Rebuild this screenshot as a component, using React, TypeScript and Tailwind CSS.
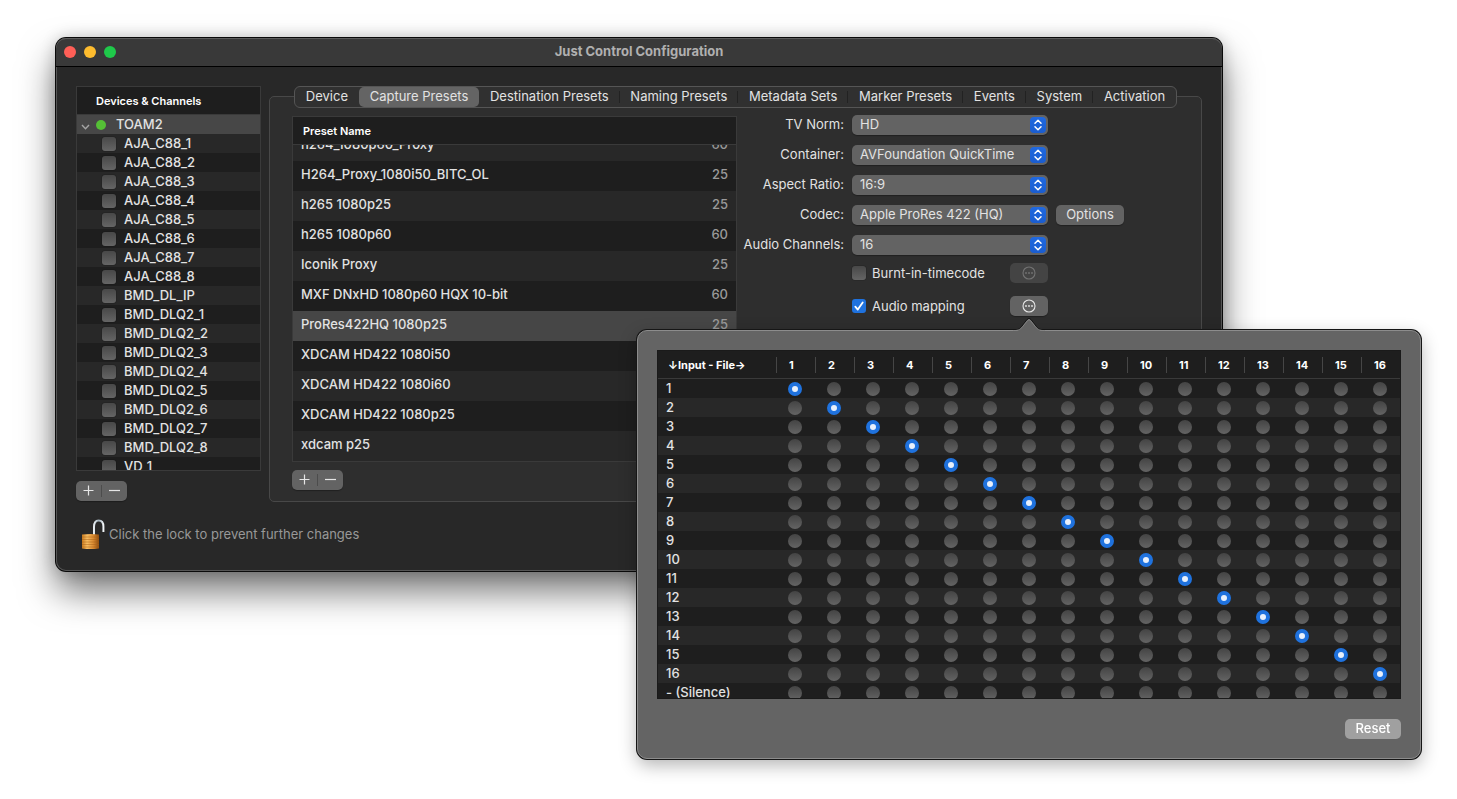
import { useLayoutEffect, useRef, useState } from 'react';
import clsx from 'clsx';

const TABS = [
  'Device',
  'Capture Presets',
  'Destination Presets',
  'Naming Presets',
  'Metadata Sets',
  'Marker Presets',
  'Events',
  'System',
  'Activation',
];

const CHANNELS = [
  ...Array.from({ length: 8 }, (_, i) => `AJA_C88_${i + 1}`),
  'BMD_DL_IP',
  ...Array.from({ length: 8 }, (_, i) => `BMD_DLQ2_${i + 1}`),
  'VD_1',
];

interface Preset {
  name: string;
  fps:  number;
}

const PRESETS: Preset[] = [
  { name: 'h264_1080p60_Proxy',         fps: 60 },
  { name: 'H264_Proxy_1080i50_BITC_OL', fps: 25 },
  { name: 'h265 1080p25',               fps: 25 },
  { name: 'h265 1080p60',               fps: 60 },
  { name: 'Iconik Proxy',               fps: 25 },
  { name: 'MXF DNxHD 1080p60 HQX 10-bit', fps: 60 },
  { name: 'ProRes422HQ 1080p25',        fps: 25 },
  { name: 'XDCAM HD422 1080i50',        fps: 50 },
  { name: 'XDCAM HD422 1080i60',        fps: 60 },
  { name: 'XDCAM HD422 1080p25',        fps: 25 },
  { name: 'xdcam p25',                  fps: 25 },
];

const FILE_CHANNELS = Array.from({ length: 16 }, (_, i) => i + 1);
const INPUTS = [...FILE_CHANNELS.map(String), '- (Silence)'];

const CHECKBOX =
  'block size-3.5 shrink-0 appearance-none rounded-[3px] bg-linear-to-b from-[#484848] to-[#656565] shadow-[0_0_1px_#000]';

function AddRemove({ what }: { what: string }) {
  return (
    <div className="flex h-5 w-[51px] items-center rounded-[5px] bg-[#636363] text-[#e6e6e6] shadow-[0_1px_1px_rgba(0,0,0,0.3)]">
      <button type="button" aria-label={`Add ${what}`} className="flex h-5 flex-1 items-center justify-center pb-px">
        <svg viewBox="0 0 11 11" className="size-[11px]" stroke="currentColor" strokeWidth="1.2">
          <path d="M5.5 0.5v10M0.5 5.5h10" />
        </svg>
      </button>
      <span className="h-3 w-px bg-[#4c4c4c]" />
      <button type="button" aria-label={`Remove ${what}`} className="flex h-5 flex-1 items-center justify-center pb-px">
        <svg viewBox="0 0 11 11" className="size-[11px]" stroke="currentColor" strokeWidth="1.2">
          <path d="M0 5.5h11" />
        </svg>
      </button>
    </div>
  );
}

function DeviceList() {
  return (
    <div className="h-[385px] overflow-hidden border border-[#3a3a3a] bg-[#1e1e1e]">
      <h2 className="h-7 border-b border-[#3a3a3a] pl-[19px] text-[11px] leading-7 font-semibold text-white">
        Devices &amp; Channels
      </h2>
      <ul className="font-medium">
        <li className="flex h-[19px] items-center bg-[#474747]">
          <svg viewBox="0 0 9 6" className="mt-1 ml-1 h-1.5 w-[9px] text-[#a5a5a5]" fill="none" stroke="currentColor" strokeWidth="1.4">
            <path d="M1 1l3.5 3.7L8 1" />
          </svg>
          <span className="ml-1.5 size-2.5 rounded-full bg-[#55c036]" />
          <span className="ml-2.5 pb-0.5">TOAM2</span>
        </li>
        {CHANNELS.map((c, i) => (
          <li key={c} className={clsx('pl-[25px]', i % 2 ? 'bg-[#1e1e1e]' : 'bg-[#282828]')}>
            <label className="flex h-[19px] items-center gap-2">
              <input type="checkbox" className={CHECKBOX} />
              <span className="pb-0.5">{c}</span>
            </label>
          </li>
        ))}
      </ul>
    </div>
  );
}

function PresetTable() {
  const scroller = useRef<HTMLDivElement>(null);
  const [selected, setSelected] = useState('ProRes422HQ 1080p25');

  // keep the end of the list in view
  useLayoutEffect(() => {
    if (scroller.current) scroller.current.scrollTop = scroller.current.scrollHeight;
  }, []);

  return (
    <div ref={scroller} className="h-[346px] overflow-hidden border border-[#3a3a3a] bg-[#1e1e1e]">
      <table className="w-full border-separate border-spacing-0">
        <thead className="sticky top-0">
          <tr>
            <th colSpan={2} className="h-7 border-b border-[#3a3a3a] bg-[#1e1e1e] p-0 pl-2.5 text-left text-[11px] font-semibold text-white">
              Preset Name
            </th>
          </tr>
        </thead>
        <tbody className="font-medium">
          {PRESETS.map((p, i) => (
            <tr
              key={p.name}
              onClick={() => setSelected(p.name)}
              className={clsx(p.name === selected ? 'bg-[#464646]' : i % 2 ? 'bg-[#1e1e1e]' : 'bg-[#282828]')}
            >
              <td className="h-[30px] p-0 pb-1 pl-2 leading-5">{p.name}</td>
              <td className="h-[30px] p-0 pr-2 pb-1 text-right leading-5 text-[#9a9a9a]">{p.fps}</td>
            </tr>
          ))}
        </tbody>
      </table>
    </div>
  );
}

function Popup({ id, label, value }: { id: string; label: string; value: string }) {
  return (
    <>
      <label htmlFor={id} className="pb-0.5 text-right whitespace-nowrap">{label}</label>
      <div className="relative">
        <select
          id={id}
          defaultValue={value}
          className="block h-5 w-full appearance-none rounded-[5px] bg-[#636363] pr-5 pb-0.5 pl-2 shadow-[0_1px_1px_rgba(0,0,0,0.3)]"
        >
          <option>{value}</option>
        </select>
        <span className="pointer-events-none absolute top-0.5 right-0.5 flex size-4 items-center justify-center rounded-sm bg-linear-to-b from-[#2069e0] to-[#1a5dd0]">
          <svg viewBox="0 0 8 12" className="h-3 w-2" fill="none" stroke="#fff" strokeWidth="1.5" strokeLinecap="round" strokeLinejoin="round">
            <path d="M1 4.3L4 1.3l3 3M1 7.7l3 3 3-3" />
          </svg>
        </span>
      </div>
    </>
  );
}

function MoreButton({ label, disabled }: { label: string; disabled?: boolean }) {
  return (
    <button
      type="button"
      aria-label={label}
      disabled={disabled}
      className={clsx(
        'flex h-5 w-[38px] items-center justify-center rounded-[5px]',
        disabled ? 'bg-[#444444] text-[#737373]' : 'bg-[#636363] text-[#e6e6e6] shadow-[0_1px_1px_rgba(0,0,0,0.3)]',
      )}
    >
      <svg viewBox="0 0 14 14" className="size-3.5">
        <circle cx="7" cy="7" r="6" fill="none" stroke="currentColor" strokeWidth="1.1" />
        <circle cx="4" cy="7" r="0.9" fill="currentColor" />
        <circle cx="7" cy="7" r="0.9" fill="currentColor" />
        <circle cx="10" cy="7" r="0.9" fill="currentColor" />
      </svg>
    </button>
  );
}

function MappingMatrix() {
  // file channel -> row of the input that feeds it
  const [mapping, setMapping] = useState(FILE_CHANNELS.map((_, i) => i));

  return (
    <div className="absolute top-[34px] -left-[373px] z-10 w-[784px] rounded-[10px] border border-[#8c8c8c] bg-[#646464] p-[19px] font-medium shadow-[0_0_0_1px_#161616,0_6px_18px_rgba(0,0,0,0.3)]">
      <svg viewBox="0 0 32 14" className="absolute -top-[14px] left-[375px] h-3.5 w-8">
        <path d="M0 14C6 14 7 12 9 9.5L14 3Q16 0.5 18 3L23 9.5C25 12 26 14 32 14Z" fill="#646464" />
        <path d="M0 12.8C6 12.8 7 11.5 9 9L14 2.5Q16 0 18 2.5L23 9C25 11.5 26 12.8 32 12.8" fill="none" stroke="#161616" />
        <path d="M0 13.6C6 13.6 7.5 12 9.5 9.8L14.5 3.6Q16 1.8 17.5 3.6L22.5 9.8C24.5 12 26 13.6 32 13.6" fill="none" stroke="#8c8c8c" strokeWidth="0.8" />
      </svg>

      <div className="h-[349px] overflow-hidden border border-[#1a1a1a] bg-[#1e1e1e]">
        <table className="w-full table-fixed border-separate border-spacing-0">
          <thead>
            <tr className="text-[11px] font-semibold text-white">
              <th className="h-7 w-[118px] border-b border-[#3a3a3a] p-0 pl-2.5 text-left leading-4 whitespace-nowrap">
                ↓Input - File→
              </th>
              {FILE_CHANNELS.map(n => (
                <th key={n} className="h-7 border-b border-[#3a3a3a] p-0 text-left">
                  <div className="h-4 border-l border-[#464646] pl-3 leading-4">{n}</div>
                </th>
              ))}
            </tr>
          </thead>
          <tbody>
            {INPUTS.map((input, row) => (
              <tr key={input} className={row % 2 ? 'bg-[#282828]' : 'bg-[#1e1e1e]'}>
                <th scope="row" className="h-[19px] p-0 pl-2 text-left leading-[19px] font-medium">{input}</th>
                {FILE_CHANNELS.map((n, col) => (
                  <td key={n} className="h-[19px] p-0 pt-[3px] pl-3 align-top">
                    <input
                      type="radio"
                      name={`file-${n}`}
                      aria-label={`Input ${input} to file channel ${n}`}
                      checked={mapping[col] === row}
                      onChange={() => setMapping(mapping.map((m, i) => (i === col ? row : m)))}
                      className="block size-3.5 appearance-none rounded-full bg-linear-to-b from-[#444444] to-[#646464] checked:border-4 checked:border-[#1f72de] checked:bg-[#e8f0fc] checked:bg-none"
                    />
                  </td>
                ))}
              </tr>
            ))}
          </tbody>
        </table>
      </div>

      <div className="mt-5 flex justify-end">
        <button
          type="button"
          onClick={() => setMapping(FILE_CHANNELS.map((_, i) => i))}
          className="h-5 w-14 rounded-[5px] bg-[#a0a0a0] pb-0.5 text-white"
        >
          Reset
        </button>
      </div>
    </div>
  );
}

function PresetForm() {
  return (
    <form className="w-[464px] shrink-0">
      <div className="grid grid-cols-[107px_196px_68px] items-center gap-x-2 gap-y-2.5">
        <Popup id="norm" label="TV Norm:" value="HD" />
        <span />
        <Popup id="container" label="Container:" value="AVFoundation QuickTime" />
        <span />
        <Popup id="aspect" label="Aspect Ratio:" value="16:9" />
        <span />
        <Popup id="codec" label="Codec:" value="Apple ProRes 422 (HQ)" />
        <button type="button" className="h-5 rounded-[5px] bg-[#636363] pb-0.5 shadow-[0_1px_1px_rgba(0,0,0,0.3)]">
          Options
        </button>
        <Popup id="channels" label="Audio Channels:" value="16" />
      </div>

      <div className="mt-2 ml-[115px] flex h-5 w-[196px] items-center justify-between">
        <label className="flex items-center gap-1.5">
          <input type="checkbox" className={CHECKBOX} />
          Burnt-in-timecode
        </label>
        <MoreButton label="Timecode options" disabled />
      </div>
      <div className="mt-[13px] ml-[115px] flex h-5 w-[196px] items-center justify-between">
        <label className="flex items-center gap-1.5">
          <span className="relative">
            <input type="checkbox" defaultChecked className="block size-3.5 appearance-none rounded-[3px] bg-[#1f72de]" />
            <svg viewBox="0 0 14 14" className="pointer-events-none absolute inset-0 size-3.5" fill="none" stroke="#fff" strokeWidth="1.8" strokeLinecap="round" strokeLinejoin="round">
              <path d="M3.3 7.6l2.5 3L10.7 3.5" />
            </svg>
          </span>
          Audio mapping
        </label>
        <div className="relative">
          <MoreButton label="Audio mapping options" />
          <MappingMatrix />
        </div>
      </div>
    </form>
  );
}

function LockIcon() {
  return (
    <svg viewBox="0 0 25 32" className="h-8 w-[25px] shrink-0">
      <defs>
        <linearGradient id="brass" x1="0" x2="1" y1="0" y2="0">
          <stop offset="0" stopColor="#c87a1e" />
          <stop offset="0.3" stopColor="#f7bd62" />
          <stop offset="0.65" stopColor="#dc8d33" />
          <stop offset="1" stopColor="#8f4c0d" />
        </linearGradient>
        <linearGradient id="steel" x1="0" x2="1" y1="0" y2="0">
          <stop offset="0" stopColor="#e8eef2" />
          <stop offset="0.5" stopColor="#9fb0bb" />
          <stop offset="1" stopColor="#f2f6f8" />
        </linearGradient>
      </defs>
      <path d="M14 17V9C14 4.8 15.5 2.4 18.6 2.4S23.4 4.8 23.4 8.6V14" fill="none" stroke="url(#steel)" strokeWidth="2" />
      <path d="M2 16.6Q10.500 15.500 19 16.600V30.400Q10.500 31.600 2 30.400Z" fill="url(#brass)" />
      <path d="M2 19h17M2 21.500h17M2 24h17M2 26.500h17M2 29h17" stroke="#a8621a" strokeWidth="0.7" opacity="0.7" />
    </svg>
  );
}

export default function App() {
  const [tab, setTab] = useState('Capture Presets');
  const active = TABS.indexOf(tab);

  return (
    <div className="min-h-screen bg-white pt-[38px] pr-[235px] pb-10 pl-14 font-[Inter,'Liberation_Sans',sans-serif] text-[13px] leading-4 text-[#e2e2e2]">
      <main className="rounded-[10px] bg-[#282828] shadow-[inset_0_0_0_1px_#555555,0_0_0_1px_#0a0a0a,0_0_16px_rgba(0,0,0,0.2),0_20px_36px_rgba(0,0,0,0.55)]">
        <header className="flex h-[29px] items-center rounded-t-[10px] border-b border-black bg-[#393939] px-2 shadow-[inset_0_1px_0_#5c5c5c]">
          <div className="flex flex-1 gap-2">
            <button type="button" aria-label="Close" className="size-3 rounded-full bg-[#ff5f57]" />
            <button type="button" aria-label="Minimize" className="size-3 rounded-full bg-[#febc2e]" />
            <button type="button" aria-label="Zoom" className="size-3 rounded-full bg-[#1fc94a]" />
          </div>
          <h1 className="pb-0.5 font-bold text-[#b0b0b0]">Just Control Configuration</h1>
          <div className="flex-1" />
        </header>

        <div className="flex gap-2 px-5 pt-[19px]">
          <aside className="w-[185px] shrink-0">
            <DeviceList />
            <div className="mt-2.5">
              <AddRemove what="device" />
            </div>
          </aside>

          <section className="flex-1">
            <nav role="tablist" className="relative mx-[25px] flex h-[22px] rounded-md border border-[#555555] bg-[#303030]">
              {TABS.map((t, i) => (
                <button
                  key={t}
                  type="button"
                  role="tab"
                  aria-selected={t === tab}
                  onClick={() => setTab(t)}
                  className={clsx(
                    'relative flex-auto pb-0.5 text-center whitespace-nowrap',
                    t === tab && 'rounded-[5px] bg-[#646464]',
                  )}
                >
                  {t}
                  {i < TABS.length - 1 && i !== active && i !== active - 1 && (
                    <span className="absolute top-1 right-0 h-3 w-px bg-[#222222]" />
                  )}
                </button>
              ))}
            </nav>

            <div className="-mt-3 flex rounded-[5px] border border-[#484848] bg-[#2e2e2e] pt-[18px] pb-[11px] pl-[22px]">
              <div className="flex-1 pt-px">
                <PresetTable />
                <div className="mt-2">
                  <AddRemove what="preset" />
                </div>
              </div>
              <PresetForm />
            </div>
          </section>
        </div>

        <footer className="flex items-center gap-1 pt-4 pr-5 pb-[21px] pl-6 text-[#989898]">
          <LockIcon />
          Click the lock to prevent further changes
        </footer>
      </main>
    </div>
  );
}
